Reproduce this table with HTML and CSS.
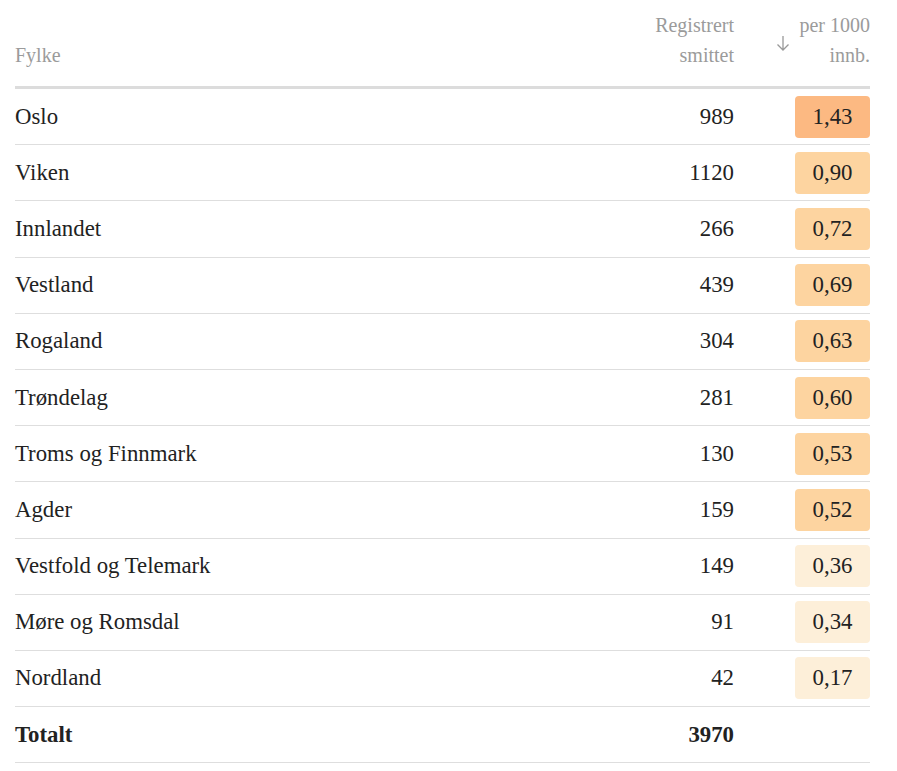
FILE: index.html
```html
<!DOCTYPE html>
<html lang="no">
<head>
<meta charset="utf-8">
<title>Smitte per fylke</title>
<link rel="stylesheet" href="styles.css">
</head>
<body>
<div class="wrap">
<table class="tbl">
  <colgroup>
    <col class="c-name">
    <col class="c-num">
    <col class="c-rate">
  </colgroup>
  <thead>
    <tr>
      <th class="h-name">Fylke</th>
      <th class="h-num">Registrert smittet</th>
      <th class="h-rate"><span class="sort"><svg class="arrow" width="14" height="16" viewBox="0 0 14 16"><path d="M7 1 V15 M1.5 9.5 L7 15 L12.5 9.5" fill="none" stroke="#999" stroke-width="1.3"/></svg>per 1000 innb.</span></th>
    </tr>
  </thead>
  <tbody>
    <tr><td>Oslo</td><td class="num">989</td><td class="rate"><div class="badge b3">1,43</div></td></tr>
    <tr><td>Viken</td><td class="num">1120</td><td class="rate"><div class="badge b2">0,90</div></td></tr>
    <tr><td>Innlandet</td><td class="num">266</td><td class="rate"><div class="badge b2">0,72</div></td></tr>
    <tr><td>Vestland</td><td class="num">439</td><td class="rate"><div class="badge b2">0,69</div></td></tr>
    <tr><td>Rogaland</td><td class="num">304</td><td class="rate"><div class="badge b2">0,63</div></td></tr>
    <tr><td>Trøndelag</td><td class="num">281</td><td class="rate"><div class="badge b2">0,60</div></td></tr>
    <tr><td>Troms og Finnmark</td><td class="num">130</td><td class="rate"><div class="badge b2">0,53</div></td></tr>
    <tr><td>Agder</td><td class="num">159</td><td class="rate"><div class="badge b2">0,52</div></td></tr>
    <tr><td>Vestfold og Telemark</td><td class="num">149</td><td class="rate"><div class="badge b1">0,36</div></td></tr>
    <tr><td>Møre og Romsdal</td><td class="num">91</td><td class="rate"><div class="badge b1">0,34</div></td></tr>
    <tr><td>Nordland</td><td class="num">42</td><td class="rate"><div class="badge b1">0,17</div></td></tr>
    <tr class="total"><td>Totalt</td><td class="num">3970</td><td class="rate"><div class="badge b0">&nbsp;</div></td></tr>
  </tbody>
</table>
</div>
</body>
</html>
```

FILE: styles.css
```css
html, body {
  margin: 0;
  padding: 0;
  background: #fff;
}
.wrap {
  padding: 10px 0 0 15px;
}
.tbl {
  width: 855px;
  border-collapse: collapse;
  table-layout: fixed;
  font-family: "Liberation Serif", "Times New Roman", serif;
  font-size: 22.8px;
  color: #222;
}
.c-num { width: 140px; }
.c-rate { width: 136px; }
thead th {
  font-weight: normal;
  font-size: 20px;
  line-height: 30px;
  color: #9b9b9b;
  vertical-align: bottom;
  padding: 0 0 16px 0;
  border-bottom: 3px solid #dcdcdc;
}
.h-name { text-align: left; }
.h-num { text-align: right; padding-left: 50px; }
.h-rate { text-align: right; padding-left: 61px; }
.sort {
  position: relative;
  display: block;
}
.arrow {
  position: absolute;
  left: -19px;
  top: 25px;
}
tbody td {
  padding: 6.6px 0;
  line-height: 30px;
  vertical-align: middle;
  border-bottom: 1px solid #dedede;
}
td.num { text-align: right; }
td.rate { padding-left: 61px; }
.badge {
  height: 30px;
  padding: 6px 0;
  border-radius: 4px;
  text-align: center;
}
.b3 { background: #fcb982; }
.b2 { background: #fdd4a0; }
.b1 { background: #fdefd9; }
.b0 { background: transparent; }
.total td { font-weight: bold; }
```
